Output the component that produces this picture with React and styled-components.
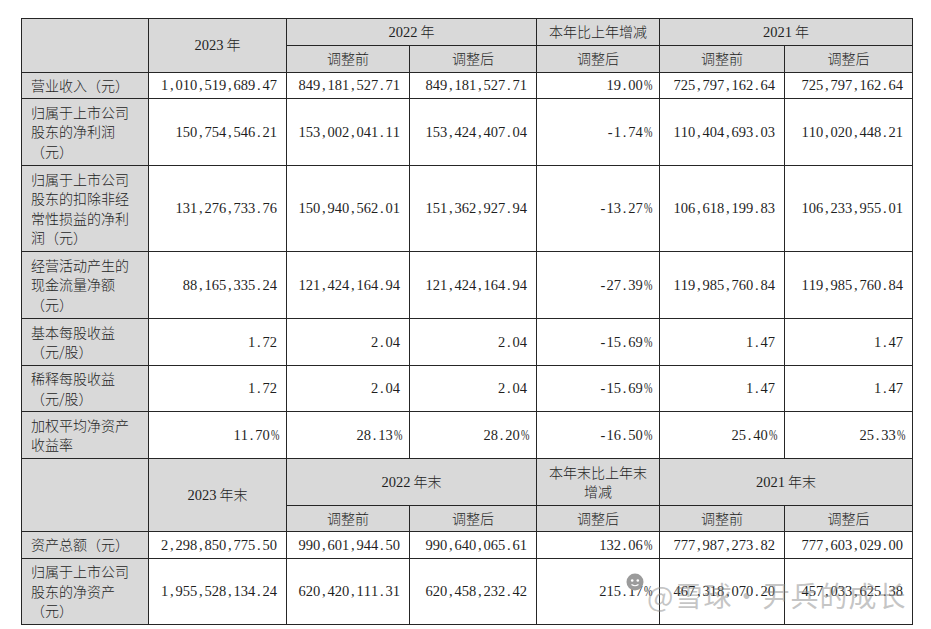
import React from 'react';
import styled, { createGlobalStyle } from 'styled-components';

const Global = createGlobalStyle`
  html, body { margin: 0; padding: 0; background: #fff; }
  body { font-family: "Noto Sans CJK SC", sans-serif; color: #1f1f1f; }
`;

const Page = styled.div`
  position: relative;
  box-sizing: border-box;
  width: 931px;
  height: 629px;
  padding: 18px 0 0 21px;
  overflow: hidden;
`;

const Table = styled.table`
  border-collapse: collapse;
  table-layout: fixed;
  width: 891px;
  font-size: 14px;
  line-height: 19.5px;
  font-weight: 300;
`;

const Row = styled.tr`
  height: ${p => p.$h}px;
`;

const Cell = styled.td`
  border: 1px solid #262626;
  padding: 0 9px 0 9px;
  vertical-align: middle;
  background: ${p => (p.$shade ? '#d9d9d9' : '#fff')};
  text-align: ${p => p.$align || 'right'};
  word-break: break-all;
`;

const Label = styled(Cell)`
  padding: 0 10px 0 9px;
  text-align: left;
  background: #d9d9d9;
`;

const Digits = styled.span`
  font-family: "Liberation Serif", "Times New Roman", serif;
  font-size: 14.5px;
  white-space: nowrap;
`;

const Ch = styled.span`
  display: inline-block;
  width: 0.5em;
  text-align: center;
  transform: ${p => (p.$squeeze ? 'scaleX(0.7)' : 'none')};
`;

const Num = ({ text }) => (
  <Digits>
    {text.split('').map((c, i) => (
      <Ch key={i} $squeeze={c === '%'}>{c}</Ch>
    ))}
  </Digits>
);

const Year = ({ y, suffix }) => (
  <span>
    <Num text={y} /> {suffix}
  </span>
);

const Watermark = styled.div`
  position: absolute;
  left: 626px;
  top: 573px;
  display: flex;
  align-items: flex-start;
  gap: 3px;
  font-size: 28px;
  line-height: 34px;
  font-weight: 400;
  color: rgba(140, 140, 140, 0.5);
  pointer-events: none;
  white-space: nowrap;
`;

const WatermarkText = styled.span`
  margin-top: 5px;
  letter-spacing: 1px;
`;

const cols = [127, 138, 123, 127, 123, 125, 128];

const rows1 = [
  { label: '营业收入（元）', h: 26, v: ['1,010,519,689.47', '849,181,527.71', '849,181,527.71', '19.00%', '725,797,162.64', '725,797,162.64'] },
  { label: '归属于上市公司股东的净利润（元）', h: 67, v: ['150,754,546.21', '153,002,041.11', '153,424,407.04', '-1.74%', '110,404,693.03', '110,020,448.21'] },
  { label: '归属于上市公司股东的扣除非经常性损益的净利润（元）', h: 86, v: ['131,276,733.76', '150,940,562.01', '151,362,927.94', '-13.27%', '106,618,199.83', '106,233,955.01'] },
  { label: '经营活动产生的现金流量净额（元）', h: 67, v: ['88,165,335.24', '121,424,164.94', '121,424,164.94', '-27.39%', '119,985,760.84', '119,985,760.84'] },
  { label: '基本每股收益（元/股）', h: 47, v: ['1.72', '2.04', '2.04', '-15.69%', '1.47', '1.47'] },
  { label: '稀释每股收益（元/股）', h: 46, v: ['1.72', '2.04', '2.04', '-15.69%', '1.47', '1.47'] },
  { label: '加权平均净资产收益率', h: 47, v: ['11.70%', '28.13%', '28.20%', '-16.50%', '25.40%', '25.33%'] },
];

const rows2 = [
  { label: '资产总额（元）', h: 27, v: ['2,298,850,775.50', '990,601,944.50', '990,640,065.61', '132.06%', '777,987,273.82', '777,603,029.00'] },
  { label: '归属于上市公司股东的净资产（元）', h: 66, v: ['1,955,528,134.24', '620,420,111.31', '620,458,232.42', '215.17%', '467,318,070.20', '457,033,625.38'] },
];

const DataRow = ({ r }) => (
  <Row $h={r.h}>
    <Label>{r.label}</Label>
    {r.v.map((x, i) => (
      <Cell key={i}><Num text={x} /></Cell>
    ))}
  </Row>
);

const Header = ({ suffix, change, top, bottom }) => (
  <>
    <Row $h={top}>
      <Cell $shade rowSpan={2} />
      <Cell $shade $align="center" rowSpan={2}><Year y="2023" suffix={suffix} /></Cell>
      <Cell $shade $align="center" colSpan={2}><Year y="2022" suffix={suffix} /></Cell>
      <Cell $shade $align="center">{change}</Cell>
      <Cell $shade $align="center" colSpan={2}><Year y="2021" suffix={suffix} /></Cell>
    </Row>
    <Row $h={bottom}>
      <Cell $shade $align="center">调整前</Cell>
      <Cell $shade $align="center">调整后</Cell>
      <Cell $shade $align="center">调整后</Cell>
      <Cell $shade $align="center">调整前</Cell>
      <Cell $shade $align="center">调整后</Cell>
    </Row>
  </>
);

const Logo = () => (
  <svg width="18" height="18" viewBox="0 0 18 18">
    <circle cx="9" cy="9" r="8.5" fill="#9b9b9b" />
    <circle cx="6.2" cy="7.5" r="1.3" fill="#fff" />
    <circle cx="11.8" cy="7.5" r="1.3" fill="#fff" />
    <path d="M5.5 11.5 Q9 14 12.5 11.5" stroke="#fff" strokeWidth="1.2" fill="none" />
  </svg>
);

export default function App() {
  return (
    <Page>
      <Global />
      <Table>
        <colgroup>
          {cols.map((w, i) => <col key={i} style={{ width: w }} />)}
        </colgroup>
        <tbody>
          <Header suffix="年" change="本年比上年增减" top={27} bottom={27} />
          {rows1.map((r, i) => <DataRow key={i} r={r} />)}
          <Header suffix="年末" change="本年末比上年末增减" top={47} bottom={26} />
          {rows2.map((r, i) => <DataRow key={i} r={r} />)}
        </tbody>
      </Table>
      <Watermark>
        <Logo />
        <WatermarkText>@雪球·尹兵的成长</WatermarkText>
      </Watermark>
    </Page>
  );
}
